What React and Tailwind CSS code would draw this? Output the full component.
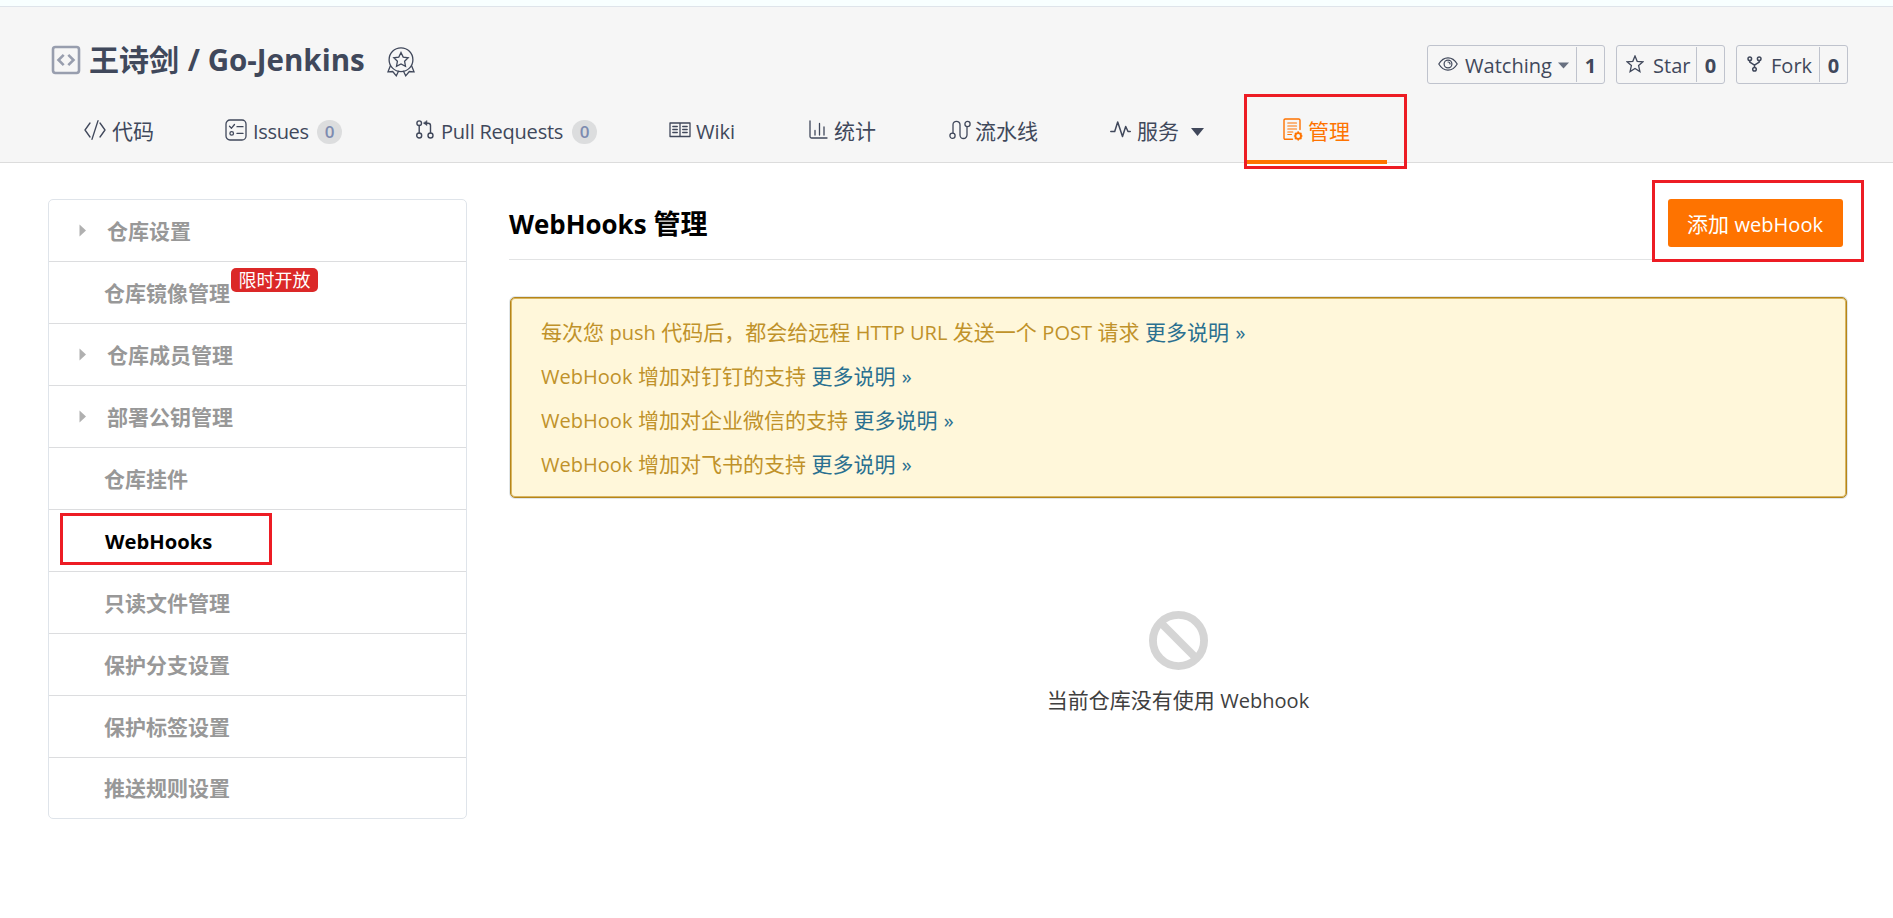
import React from "react";

function En({ children, className = "" }) {
  return <span className={`text-[0.955em] leading-none ${className}`}>{children}</span>;
}

function Icon({ children, className = "", viewBox = "0 0 24 24", sw = 1.5 }) {
  return (
    <svg
      className={`block shrink-0 ${className}`}
      viewBox={viewBox}
      fill="none"
      stroke="currentColor"
      strokeWidth={sw}
      strokeLinejoin="round"
      strokeLinecap="round"
    >
      {children}
    </svg>
  );
}

function RepoIcon() {
  return (
    <Icon className="h-[30px] w-[30px] text-[#989eae]" viewBox="0 0 30 30" sw={2.6}>
      <rect x="2" y="2" width="26" height="26" rx="2.4" />
      <path d="M12.700 9.800 7.500 15l5.200 5.200M17.300 9.800 22.500 15l-5.200 5.200" strokeLinecap="butt" strokeLinejoin="miter" />
    </Icon>
  );
}

function MedalIcon() {
  return (
    <Icon className="h-[30px] w-[28px]" viewBox="0 0 28 30" sw={1.3}>
      <circle cx="14" cy="12.700" r="11.900" />
      <path d="m14 5.500 2.200 4.600 5 .7-3.600 3.500.9 5-4.500-2.400-4.500 2.400.9-5-3.600-3.500 5-.7z" strokeLinejoin="miter" />
      <path d="M3.300 19 1 24.800l4.700-.3 3.600 4.300 2.200-4.500M24.700 19 27 24.800l-4.700-.3-3.600 4.300-2.200-4.500" strokeLinejoin="miter" />
    </Icon>
  );
}

function CodeIcon() {
  return (
    <Icon className="h-[20px] w-[22px]" viewBox="0 0 22 20" sw={1.3}>
      <path d="M6 3 1 10l5 7M16 3l5 7-5 7M14 .7 8 19.300" />
    </Icon>
  );
}

function IssueIcon() {
  return (
    <Icon className="h-[22px] w-[22px]" viewBox="0 0 22 22" sw={1.3}>
      <rect x="1" y="1" width="20" height="20" rx="4" />
      <path d="m4.500 7.200 2 2 3-3.700M12 7.700h6M12 14.400h6" />
      <circle cx="6.700" cy="14.400" r="1.800" />
    </Icon>
  );
}

function PullIcon() {
  return (
    <Icon className="h-[19px] w-[18px]" viewBox="0 0 18 19" sw={1.4}>
      <circle cx="3.200" cy="3.200" r="2.300" />
      <circle cx="3.200" cy="15.500" r="2.500" />
      <circle cx="14.500" cy="15.500" r="2.500" />
      <path d="M3.200 5.500V13M14.500 13V5.500q0-2.300-2.300-2.300H8.500" />
      <path d="M11 .8v4.800L7.600 3.200z" fill="currentColor" strokeWidth="0.5" />
    </Icon>
  );
}

function WikiIcon() {
  return (
    <Icon className="h-[16px] w-[22px]" viewBox="0 0 22 16" sw={1.3}>
      <path d="M1 1h20v13.500H1zM11 1v13.500M3.800 4.500h4.500M3.800 7.500h4.500M3.800 10.500h4.500M13.700 4.500h4.500M13.700 7.500h4.500M13.700 10.500h4.500" />
    </Icon>
  );
}

function ChartIcon() {
  return (
    <Icon className="h-[19px] w-[19px]" viewBox="0 0 19 19" sw={1.3}>
      <path d="M1 1v15.500Q1 18 2.500 18H18M6 10.500V15M10.500 3.500V15M15 7v8" />
    </Icon>
  );
}

function PipeIcon() {
  return (
    <Icon className="h-[20px] w-[22px]" viewBox="0 0 22 20" sw={1.3}>
      <circle cx="3.500" cy="15.800" r="2.600" />
      <circle cx="18.500" cy="4" r="2.600" />
      <path d="M4 13V4.800a3.500 3.500 0 0 1 7 0v10.200a3.500 3.500 0 0 0 7 0V6.800" />
    </Icon>
  );
}

function PulseIcon() {
  return (
    <Icon className="h-[19px] w-[21px]" viewBox="0 0 21 19" sw={1.5}>
      <path d="M.8 11.500h3.900L7.700 2l4.800 14.500L15.700 6.500l2.300 5h2.300" />
    </Icon>
  );
}

function ManageIcon() {
  return (
    <Icon className="h-[23px] w-[20px]" viewBox="0 0 20 23" sw={1.4}>
      <path d="M9.500 21.300H2.300Q1 21.300 1 20V2.300Q1 1 2.300 1h13.400Q17 1 17 2.300v9.200" />
      <path d="M4.800 5h8.700M4.800 8h8.700M4.800 11h8.700M4.800 14h5M4.800 16.500h3.700" strokeWidth="1.200" />
      <path d="m15.200 13.300 1.300 1.400 1.900.2.200 1.800.8 1.300-.8 1.300-.2 1.800-1.900.2-1.300 1.400-1.300-1.400-1.900-.2-.2-1.800-.8-1.300.8-1.300.2-1.800 1.900-.2z" fill="currentColor" strokeWidth="0.400" />
      <circle cx="15.200" cy="18" r="1.900" fill="#f6f6f6" stroke="none" />
    </Icon>
  );
}

function EyeIcon() {
  return (
    <Icon className="h-[14px] w-[20px]" viewBox="0 0 20 14" sw={1.2}>
      <path d="M.8 7Q4.500.8 10 .8T19.200 7Q15.500 13.200 10 13.200T.8 7z" />
      <circle cx="10" cy="7" r="3.900" />
      <path d="M10 5a2 2 0 0 1 2 2" />
    </Icon>
  );
}

function StarIcon() {
  return (
    <Icon className="h-[18px] w-[18px]" viewBox="0 0 18 18" sw={1.3}>
      <path d="m9 1 2.200 5.300 5.800.5-4.400 3.800 1.300 5.900L9 13.400l-4.900 3.100 1.300-5.900L1 6.800l5.800-.5z" strokeLinejoin="miter" />
    </Icon>
  );
}

function ForkIcon() {
  return (
    <Icon className="h-[16px] w-[15px]" viewBox="0 0 15 16" sw={1.5}>
      <circle cx="2.800" cy="2.800" r="1.800" />
      <circle cx="12.200" cy="2.800" r="1.800" />
      <circle cx="7.500" cy="13.200" r="1.800" />
      <path d="M2.800 4.700v1.500l4.700 3 4.700-3V4.700M7.500 9.200v2.100" />
    </Icon>
  );
}

function Badge() {
  return (
    <span className="mt-[2px] flex h-[24px] w-[25px] items-center justify-center rounded-full bg-[#dcddde] text-[17px] font-semibold text-[#7d8bb0]">
      0
    </span>
  );
}

function Tab({ className, icon, gap, children }) {
  return (
    <div className={`flex h-full shrink-0 items-center whitespace-nowrap ${className}`}>
      <span className="pb-[3px]">{icon}</span>
      <span className={`pt-[2px] ${gap}`}>{children}</span>
    </div>
  );
}

function CountButton({ className, icon, label, count, countClass }) {
  return (
    <div className={`flex h-[39px] rounded-[3px] border border-[#bfc3cd] ${className}`}>
      <div className="flex flex-1 items-center whitespace-nowrap pl-[10px]">
        <span className="pb-[2px]">{icon}</span>
        {label}
      </div>
      <div className={`my-px flex items-center justify-center border-l border-[#bfc3cd] pt-[2px] text-[20px] font-bold text-[#40485b] ${countClass}`}>
        {count}
      </div>
    </div>
  );
}

const menu = [
  { label: "仓库设置", arrow: true },
  { label: "仓库镜像管理", tag: "限时开放" },
  { label: "仓库成员管理", arrow: true },
  { label: "部署公钥管理", arrow: true },
  { label: "仓库挂件" },
  { label: "WebHooks", active: true },
  { label: "只读文件管理" },
  { label: "保护分支设置" },
  { label: "保护标签设置" },
  { label: "推送规则设置" },
];

function MenuItem({ item }) {
  return (
    <div className="relative flex h-[62px] items-center border-b border-[#dcdddf] pt-[2px] font-bold text-[#989898] last:h-[60px] last:border-b-0">
      {item.active && (
        <div className="absolute left-[11px] top-[3px] h-[52px] w-[212px] border-[3px] border-[#ed1c24]" />
      )}
      <div className={item.arrow ? "w-[58px] pl-[30px]" : "w-[55px]"}>
        {item.arrow && (
          <svg className="mb-[3px] block h-[13px] w-[8px]" viewBox="0 0 8 13">
            <path d="M.5.5 7 6.500.5 12.500z" fill="#b0b0b0" />
          </svg>
        )}
      </div>
      <span className={item.active ? "pl-px text-[20.200px] text-black" : ""}>{item.label}</span>
      {item.tag && (
        <span className="mb-[27px] ml-px flex h-[24px] w-[87px] items-center justify-center rounded-[5px] bg-[#db2828] pt-px text-[18px] font-normal text-white">
          {item.tag}
        </span>
      )}
    </div>
  );
}

function More() {
  return (
    <a className="text-[#2a7090]">
      更多说明 <En className="ml-px">»</En>
    </a>
  );
}

export default function App() {
  return (
    <div className="relative h-[918px] w-[1893px] overflow-hidden bg-white font-['Open_Sans','Noto_Sans_CJK_SC',sans-serif] text-[21px] text-[#40485b]">
      <div className="h-[7px] border-b border-[#dfe4ea] bg-[#f8ffff]" />
      <header className="flex h-[156px] flex-col border-b border-[#dcdcdc] bg-[#f6f6f6]">
        <div className="flex h-[93px] items-start justify-between pr-[45px]">
          <div className="flex items-center pl-[51px] pt-[32px]">
            <RepoIcon />
            <h1 className="ml-[8px] w-[284px] whitespace-nowrap text-[30px] font-bold leading-[42px]">
              王诗剑 <span className="ml-px text-[29.500px] leading-none">/ Go-Jenkins</span>
            </h1>
            <span className="ml-[14px] pt-[4px]">
              <MedalIcon />
            </span>
          </div>
          <div className="flex gap-[11px] pt-[38px]">
            <CountButton
              className="w-[178px]"
              icon={<EyeIcon />}
              label={
                <>
                  <En className="ml-[7px] pt-[3px]">Watching</En>
                  <svg className="ml-[6px] mt-[2px] block h-[7px] w-[11px]" viewBox="0 0 11 7">
                    <path d="M0 .5h11L5.500 6.500z" fill="#687080" />
                  </svg>
                </>
              }
              count="1"
              countClass="w-[28px]"
            />
            <CountButton className="w-[109px]" icon={<span className="-ml-px block"><StarIcon /></span>} label={<En className="ml-[9px] pt-[3px]">Star</En>} count="0" countClass="w-[28px]" />
            <CountButton className="w-[112px]" icon={<ForkIcon />} label={<En className="ml-[9px] pt-[3px]">Fork</En>} count="0" countClass="w-[28px]" />
          </div>
        </div>
        <nav className="flex h-[62px] pl-[84px]">
          <Tab className="w-[141px]" icon={<CodeIcon />} gap="ml-[6px]">代码</Tab>
          <div className="flex w-[191px] items-center">
            <Tab className="w-[92px]" icon={<IssueIcon />} gap="ml-[6px]"><En className="tracking-[-0.35px]">Issues</En></Tab>
            <Badge />
          </div>
          <div className="flex w-[253px] items-center">
            <Tab className="w-[156px]" icon={<PullIcon />} gap="ml-[7px]"><En className="tracking-[-0.25px]">Pull Requests</En></Tab>
            <Badge />
          </div>
          <Tab className="w-[140px]" icon={<WikiIcon />} gap="ml-[5px]"><En>Wiki</En></Tab>
          <Tab className="w-[140px]" icon={<ChartIcon />} gap="ml-[6px]">统计</Tab>
          <Tab className="w-[161px]" icon={<PipeIcon />} gap="ml-[4px]">流水线</Tab>
          <div className="flex w-[137px] items-center">
            <Tab icon={<PulseIcon />} gap="ml-[6px]">服务</Tab>
            <svg className="ml-[12px] mt-[2px] block h-[8px] w-[13px]" viewBox="0 0 13 8">
              <path d="M0 0h13L6.500 8z" fill="#40485b" />
            </svg>
          </div>
          <div className="relative w-[140px] pl-[36px] text-[#fe7300]">
            <Tab icon={<ManageIcon />} gap="ml-[5px]">管理</Tab>
            <div className="absolute -bottom-[2px] left-0 h-[4px] w-[140px] bg-[#fe7300]" />
            <div className="absolute -left-[3px] -top-[6px] h-[75px] w-[163px] border-[3px] border-[#ed1c24]" />
          </div>
        </nav>
      </header>

      <main className="flex items-start pl-[48px] pr-[45px] pt-[36px]">
        <aside className="w-[419px] rounded-[5px] border border-[#dfe4ea]">
          {menu.map((item) => (
            <MenuItem key={item.label} item={item} />
          ))}
        </aside>

        <section className="ml-[42px] flex-1">
          <div className="flex h-[61px] items-start justify-between border-b border-[#e2e3e4] pr-[5px]">
            <h2 className="pt-[5px] text-[27px] font-bold leading-[40px] text-black">
              <span className="text-[25.900px] leading-none">WebHooks</span> 管理
            </h2>
            <div className="relative">
              <button className="flex h-[48px] w-[175px] items-center justify-center whitespace-nowrap rounded-[3px] bg-[#fe7300] pr-px pt-[3px] text-white">
                <span>添加 <En>webHook</En></span>
              </button>
              <div className="absolute -left-[16px] -top-[19px] h-[82px] w-[212px] border-[3px] border-[#ed1c24]" />
            </div>
          </div>

          <div className="mx-px mt-[37px] h-[201px] rounded-[5px] border border-[#b5851a] bg-[#fff7da] pl-[30px] pt-[12px] leading-[44px] text-[#c0922a] shadow-[0_0_0_1px_#e1e6e8,inset_0_0_0_1px_#d9b661]">
            <p>每次您 <En>push</En> 代码后，都会给远程 <En>HTTP URL</En> 发送一个 <En>POST</En> 请求 <More /></p>
            <p><En>WebHook</En> 增加对钉钉的支持 <More /></p>
            <p><En>WebHook</En> 增加对企业微信的支持 <More /></p>
            <p><En>WebHook</En> 增加对飞书的支持 <More /></p>
          </div>

          <div className="mt-[113px] flex flex-col items-center pr-px text-[#404040]">
            <svg className="block h-[59px] w-[59px]" viewBox="0 0 60 60" fill="none" stroke="#d5d5d5" strokeWidth="8">
              <circle cx="30" cy="30" r="26" />
              <path d="m12 12 36 36" />
            </svg>
            <p className="mt-[14px] leading-[32px]">当前仓库没有使用 <En>Webhook</En></p>
          </div>
        </section>
      </main>
    </div>
  );
}
